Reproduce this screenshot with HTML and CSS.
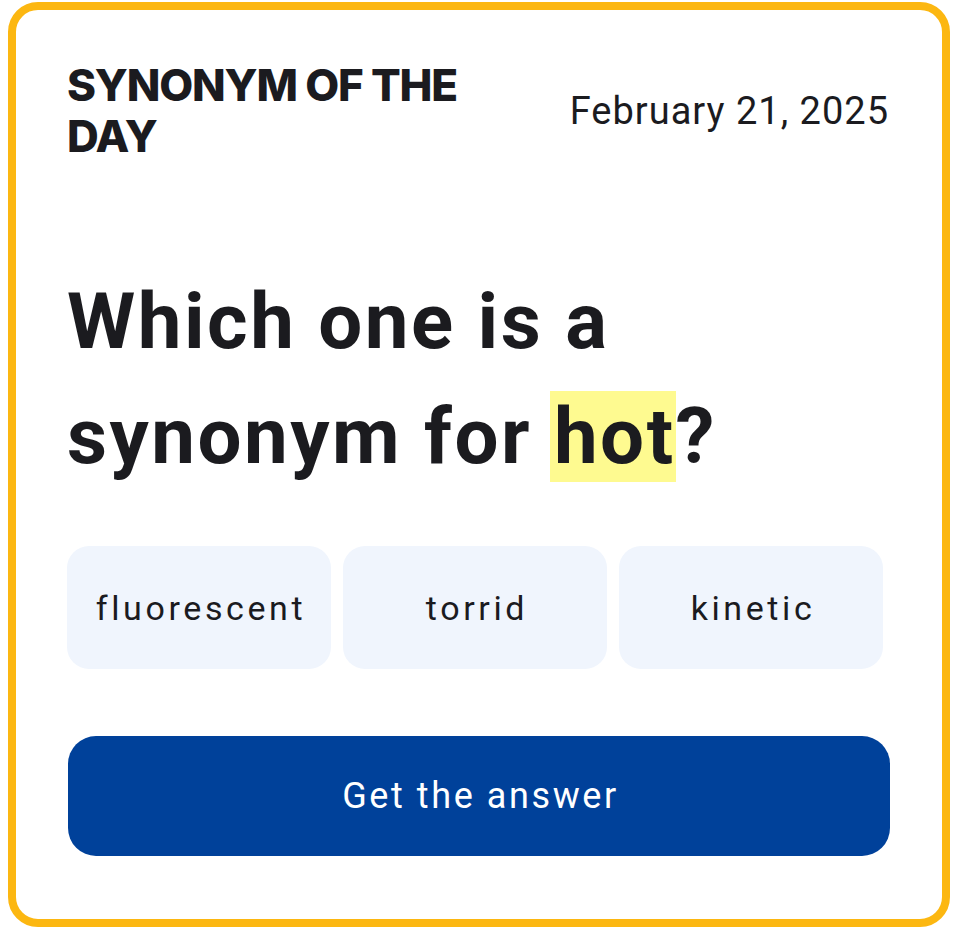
FILE: index.html
```html
<!DOCTYPE html>
<html lang="en">
<head>
<meta charset="utf-8">
<title>Synonym of the Day</title>
<link rel="stylesheet" href="styles.css">
</head>
<body>
<div class="card">
  <header class="card-header">
    <h1 class="title">SYNONYM OF THE DAY</h1>
    <div class="date">February 21, 2025</div>
  </header>
  <h2 class="question">Which one is a synonym for <span class="hl">hot</span>?</h2>
  <div class="choices">
    <button class="chip">fluorescent</button>
    <button class="chip">torrid</button>
    <button class="chip">kinetic</button>
  </div>
  <button class="answer">Get the answer</button>
</div>
</body>
</html>
```

FILE: styles.css
```css
html, body {
  margin: 0;
  padding: 0;
  background: #ffffff;
}
body {
  font-family: "Roboto", "Noto Sans", sans-serif;
  color: #1b1b1f;
}
.card {
  box-sizing: border-box;
  width: 942px;
  height: 925px;
  margin: 2px 0 0 8px;
  border: 8px solid #fcb711;
  border-radius: 30px;
  padding: 50px 53px 0 51px;
}
.card-header {
  display: flex;
  justify-content: space-between;
  align-items: center;
}
.title {
  margin: 0;
  width: 420px;
  font-family: "Inter", "Lato", sans-serif;
  font-weight: 800;
  font-size: 44px;
  line-height: 51px;
  letter-spacing: -1.2px;
  color: #1b1b1f;
}
.date {
  font-size: 38px;
  font-weight: 400;
  letter-spacing: 1px;
  color: #1b1b1f;
  margin-right: 0;
}
.question {
  margin: 102px 0 0 0;
  font-size: 78px;
  line-height: 115px;
  font-weight: 700;
  letter-spacing: 2.5px;
  color: #1b1b1f;
  width: 760px;
}
.hl {
  background: #fefa90;
  padding-left: 4px;
  margin-left: -4px;
}
.choices {
  display: flex;
  gap: 12px;
  margin-top: 52px;
}
.chip {
  width: 264px;
  height: 123px;
  border: none;
  border-radius: 22px;
  background: #f0f5fd;
  font-family: "Roboto", "Noto Sans", sans-serif;
  font-size: 34px;
  letter-spacing: 3.6px;
  color: #1b1b1f;
  padding: 0 0 0 4px;
}
.answer {
  display: block;
  width: 822px;
  height: 120px;
  margin: 67px 0 0 1px;
  border: none;
  border-radius: 28px;
  background: #00419a;
  color: #ffffff;
  font-family: "Roboto", "Noto Sans", sans-serif;
  font-size: 36px;
  letter-spacing: 2.6px;
  padding: 0 0 0 3px;
}
```
